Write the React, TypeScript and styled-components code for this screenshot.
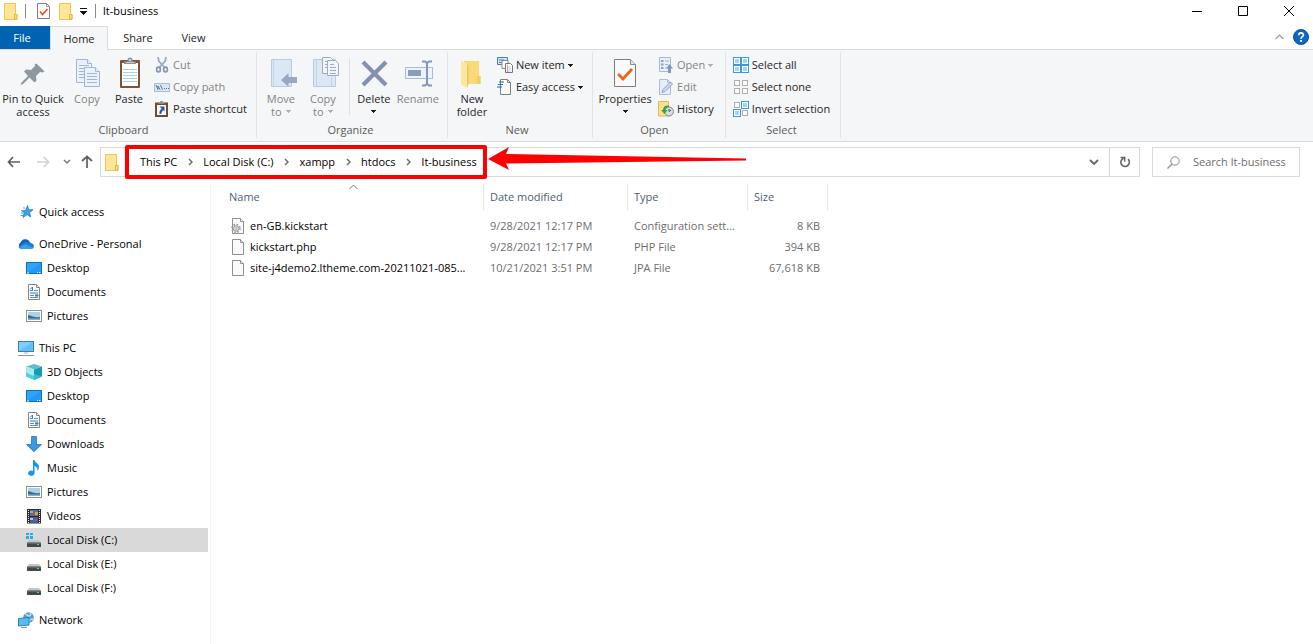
import React from "react";
import styled, { createGlobalStyle } from "styled-components";

const GlobalStyle = createGlobalStyle`
  *, *::before, *::after { box-sizing: border-box; }
  html, body, #root { height: 100%; }
  body { margin: 0; background: #fff; overflow: hidden; }
  body, button, input { font: 11px/16px "Open Sans", "Noto Sans", sans-serif; color: #000; }
  button { border: 0; padding: 0; background: none; }
  svg { display: block; flex: none; }
`;

const Window = styled.div`
  display: flex;
  flex-direction: column;
  min-height: 100%;
`;

/* ---------- title bar ---------- */

const TitleBar = styled.header`
  display: flex;
  align-items: center;
  height: 22px;
  padding-left: 4px;
`;
const QuickTools = styled.div`
  display: flex;
  align-items: center;
`;
const ToolButton = styled.button<{ $w: number }>`
  display: flex;
  justify-content: center;
  width: ${(p) => p.$w}px;
`;
const TitleRule = styled.span`
  width: 1px;
  height: 14px;
  background: #8a8a8a;
`;
const Title = styled.h1`
  margin: 0;
  font-size: 11px;
  font-weight: 400;
`;
const WindowControls = styled.div`
  display: flex;
  margin-left: auto;
  padding-right: 1px;
`;
const ControlButton = styled.button`
  display: flex;
  align-items: center;
  justify-content: center;
  width: 46px;
  height: 20px;
`;

/* ---------- tabs ---------- */

const TabBar = styled.div`
  display: flex;
  align-items: stretch;
  height: 28px;
  padding-top: 4px;
  border-bottom: 1px solid #dadbdc;
`;
const Tab = styled.button<{ $kind?: "file" | "active"; $w: number }>`
  width: ${(p) => p.$w}px;
  height: ${(p) => (p.$kind === "active" ? 24 : 23)}px;
  padding-right: ${(p) => (p.$kind === "file" ? 6 : 0)}px;
  color: ${(p) => (p.$kind === "file" ? "#fff" : "#222")};
  background: ${(p) => (p.$kind === "file" ? "#0063b1" : p.$kind === "active" ? "#f5f6f7" : "none")};
  border: ${(p) => (p.$kind === "active" ? "1px solid #dadbdc" : "0")};
  border-bottom: 0;
`;
const TabTools = styled.div`
  display: flex;
  align-items: center;
  gap: 9px;
  height: 22px;
  margin-left: auto;
  padding-right: 4px;
`;

/* ---------- ribbon ---------- */

const Ribbon = styled.div`
  display: flex;
  height: 92px;
  padding: 2px 0 3px;
  background: #f5f6f7;
  border-bottom: 1px solid #dadbdc;
`;
const Group = styled.section<{ $left: number; $right: number }>`
  display: flex;
  flex-direction: column;
  padding: 0 ${(p) => p.$right}px 0 ${(p) => p.$left}px;
  border-right: 1px solid #e2e3e4;
`;
const GroupBody = styled.div`
  display: flex;
  height: 72px;
`;
const GroupName = styled.h2`
  margin: 0;
  padding-top: 2px;
  font-size: 11px;
  line-height: 16px;
  font-weight: 400;
  text-align: center;
  color: #5a5a5a;
`;
const BigButton = styled.button<{ $w: number }>`
  display: flex;
  flex-direction: column;
  align-items: center;
  width: ${(p) => p.$w}px;
  padding-top: 5px;
  line-height: 13px;
  white-space: nowrap;
  color: #262626;
  &:disabled { color: #838383; }
  svg { margin-bottom: 3px; }
`;
const Line = styled.span`
  display: flex;
  align-items: center;
  gap: 4px;
  height: 13px;
  svg { margin: 0; }
`;
const SmallList = styled.div<{ $gap: number }>`
  display: flex;
  flex-direction: column;
  padding-top: 2px;
  margin-left: ${(p) => p.$gap}px;
`;
const SmallButton = styled.button`
  display: flex;
  align-items: center;
  gap: 3px;
  height: 22px;
  white-space: nowrap;
  color: #262626;
  &:disabled { color: #838383; }
`;
const InnerRule = styled.span`
  width: 1px;
  height: 56px;
  margin: 7px 3px 0 5px;
  background: #dcdde0;
`;

/* ---------- address row ---------- */

const AddressRow = styled.div`
  display: flex;
  align-items: center;
  height: 40px;
  padding-right: 13px;
`;
const NavButton = styled.button<{ $w: number }>`
  display: flex;
  justify-content: center;
  width: ${(p) => p.$w}px;
`;
const AddressBox = styled.div`
  display: flex;
  flex: 1;
  height: 30px;
  margin-left: 1px;
  border: 1px solid #d9d9d9;
  align-items: center;
  > svg { margin: 0 6px 0 4px; }
`;
const Crumbs = styled.nav`
  position: relative;
  display: flex;
  align-items: center;
  height: 28px;
  padding-right: 10px;
  white-space: nowrap;
`;
const Crumb = styled.a`
  color: #000;
  text-decoration: none;
`;
const CrumbArrow = styled.span<{ $w: number }>`
  display: flex;
  justify-content: center;
  width: ${(p) => p.$w}px;
`;
const Highlight = styled.span`
  position: absolute;
  inset: -3px 0;
  border: 4px solid #fe0000;
  border-radius: 2px;
  pointer-events: none;
`;
const Pointer = styled.svg`
  position: absolute;
  left: 100%;
  top: -2px;
  pointer-events: none;
`;
const BoxButton = styled.button<{ $divided?: boolean }>`
  display: flex;
  align-items: center;
  justify-content: center;
  width: 30px;
  height: 28px;
  margin-left: ${(p) => (p.$divided ? "0" : "auto")};
  border-left: ${(p) => (p.$divided ? "1px solid #d9d9d9" : "0")};
`;
const SearchBox = styled.label`
  display: flex;
  align-items: center;
  gap: 13px;
  width: 148px;
  height: 30px;
  margin-left: 12px;
  padding-left: 14px;
  border: 1px solid #d9d9d9;
`;
const SearchInput = styled.input`
  flex: 1;
  min-width: 0;
  border: 0;
  padding: 0;
  outline: 0;
  background: none;
  &::placeholder { color: #6d6d6d; opacity: 1; }
`;

/* ---------- body ---------- */

const Body = styled.div`
  display: flex;
  flex: 1;
  padding-top: 2px;
`;
const Sidebar = styled.nav`
  display: flex;
  flex-direction: column;
  gap: 8px;
  width: 211px;
  padding: 16px 2px 0 0;
  border-right: 1px solid #f3f3f3;
`;
const Branch = styled.ul`
  margin: 0;
  padding: 0;
  list-style: none;
`;
const Item = styled.a<{ $nested?: boolean; $selected?: boolean }>`
  display: flex;
  align-items: center;
  gap: 5px;
  height: 24px;
  padding-left: ${(p) => (p.$nested ? 26 : 18)}px;
  color: #000;
  text-decoration: none;
  background: ${(p) => (p.$selected ? "#d9d9d9" : "none")};
`;
const Main = styled.main`
  flex: 1;
  padding-left: 13px;
`;
const Files = styled.table`
  width: 604px;
  table-layout: fixed;
  border-collapse: collapse;
`;
const Head = styled.th<{ $w: number }>`
  width: ${(p) => p.$w}px;
  padding: 0 0 5px;
  font-weight: 400;
  text-align: left;
`;
const HeadLabel = styled.div<{ $first?: boolean }>`
  position: relative;
  height: 26px;
  padding-left: ${(p) => (p.$first ? 5 : 6)}px;
  line-height: 26px;
  color: #4c607a;
  border-right: 1px solid #e5e5e5;
`;
const SortMark = styled.svg`
  position: absolute;
  top: 0;
  left: 50%;
  margin-left: -5px;
`;
const Cell = styled.td<{ $kind?: "name" | "size" }>`
  height: 21px;
  padding: 0 ${(p) => (p.$kind === "size" ? 8 : 0)}px 0 ${(p) => (p.$kind === "name" ? 7 : 6)}px;
  text-align: ${(p) => (p.$kind === "size" ? "right" : "left")};
  white-space: nowrap;
  color: #6d6d6d;
`;
const FileName = styled.span`
  display: flex;
  align-items: center;
  gap: 5px;
  color: #000;
`;

/* ---------- icons ---------- */

const Folder = () => (
  <svg width="14" height="17" viewBox="0 0 14 17">
    <path d="M.5.5h11v11h1.500v5H.5z" fill="#ffe694" stroke="#e9c65a" />
    <path d="M10.500 16v-4.500h2.500V16z" fill="#ffe08a" stroke="#e0b640" />
  </svg>
);
const MiniCheck = () => (
  <svg width="13" height="16" viewBox="0 0 13 16">
    <path d="M.5.5h9l3 3v12H.5z" fill="#fbfbfb" stroke="#7f7f7f" />
    <path d="M9.500.5v3h3" fill="none" stroke="#9a9a9a" />
    <path d="M3 8.500l2.500 3 5-5.500" fill="none" stroke="#e8541c" strokeWidth="1.700" />
  </svg>
);
const Down = ({ off = false }: { off?: boolean }) => (
  <svg width="5" height="3" viewBox="0 0 5 3" shapeRendering="crispEdges">
    <path d="M0 0h5v1H4v1H3v1H2V2H1V1H0z" fill={off ? "#b0b0b0" : "#1e1e1e"} />
  </svg>
);
const Chevron = ({ color = "#6e6e6e", dir = "right" }: { color?: string; dir?: "right" | "down" }) =>
  dir === "right" ? (
    <svg width="5" height="8" viewBox="0 0 5 8">
      <path d="M1 1l3 3-3 3" fill="none" stroke={color} strokeWidth="1.500" />
    </svg>
  ) : (
    <svg width="8" height="6" viewBox="0 0 8 6">
      <path d="M1 1l3 3 3-3" fill="none" stroke={color} strokeWidth="1.500" />
    </svg>
  );

const Pin = () => (
  <svg width="32" height="32" viewBox="0 0 32 32">
    <path d="M19.500 6.500L27.500 14.500l-2 1-2.500-.5-4 4 .5 4.500-2 2-5-5L6 27l-2.500 1L4.500 25.500 11 19 7 14.500l2-2 5 .5 4-4-.3-1.400z" fill="#8c979f" />
  </svg>
);
const CopyIcon = () => (
  <svg width="32" height="32" viewBox="0 0 32 32">
    <g fill="#eaf1fb" stroke="#a3b6d3">
      <path d="M5.500 2.500h11l4 4v19h-15z" />
      <path d="M16.500 2.500v4h4" />
      <path d="M8 8.500h10M8 11.500h10M8 14.500h6M8 17.500h5M8 20.500h5" strokeWidth="1" />
      <path d="M13.500 10.500h11l4 4v15h-15z" />
      <path d="M24.500 10.500v4h4" />
      <path d="M16 16.500h10M16 19.500h10M16 22.500h10M16 25.500h10" />
    </g>
  </svg>
);
const PasteIcon = () => (
  <svg width="32" height="32" viewBox="0 0 32 32">
    <rect x="7" y="3" width="20" height="28" rx="1" fill="#7b5535" />
    <rect x="9" y="6" width="16" height="23" fill="#fff" />
    <path d="M10 12.500h14M10 15.500h14M10 18.500h14M10 21.500h14M10 24.500h14" stroke="#a9cfeb" />
    <path d="M11 7V4.500h3.500V3a2.500 2.500 0 0 1 5 0v1.500H23V7z" fill="#8d9298" />
    <path d="M13 5.500h8" stroke="#c7cacd" />
    <circle cx="17" cy="3" r="1" fill="#e9eaeb" />
  </svg>
);
const CutIcon = () => (
  <svg width="16" height="16" viewBox="0 0 16 16">
    <path d="M4 0l.8 4L11 11M12 0l-.8 4L5 11" fill="none" stroke="#9aabc4" strokeWidth="1.800" />
    <g fill="none" stroke="#8093b3" strokeWidth="1.600">
      <ellipse cx="4.500" cy="12.500" rx="1.900" ry="2.400" />
      <ellipse cx="11.500" cy="12.500" rx="1.900" ry="2.400" />
    </g>
  </svg>
);
const CopyPathIcon = () => (
  <svg width="16" height="16" viewBox="0 0 16 16">
    <rect x=".5" y="4.500" width="15" height="8" fill="#dbe6f5" stroke="#a9bddb" />
    <path d="M2 6l2 4.500V7l2 3.500M6.500 6l2 4.500" fill="none" stroke="#5d7399" />
    <path d="M10 9.500h1M12 9.500h1M14 9.500h1" stroke="#5d7399" />
  </svg>
);
const ShortcutIcon = () => (
  <svg width="16" height="16" viewBox="0 0 16 16">
    <rect x="1" y="1.500" width="13" height="14.500" fill="#6f4c30" />
    <rect x="3" y="4" width="9" height="10" fill="#f4f8fd" />
    <path d="M4.500 3V1.500h1.800V0h2.400v1.500h1.800V3z" fill="#8b8f94" />
    <path d="M5.500 5.500h5v5L9 9l-2 4H5.500c-.3-2.500.5-3.800 2-5.500z" fill="#2a5ca8" />
  </svg>
);
const MoveIcon = () => (
  <svg width="32" height="32" viewBox="0 0 32 32">
    <path d="M6.500 2.500h20v27h-20z" fill="#dbe7f5" stroke="#b9cbe2" />
    <path d="M8.500 3v26" stroke="#c6d6ea" />
    <path d="M16 23l7.500-7v4H32v6h-8.500v4z" fill="#98a8c2" />
  </svg>
);
const CopyToIcon = () => (
  <svg width="32" height="32" viewBox="0 0 32 32">
    <path d="M6.500 2.500h22v27h-22z" fill="#dbe7f5" stroke="#b9cbe2" />
    <path d="M9.500 3v26M24.500 20v9" stroke="#c3d3e9" />
    <g fill="#f2f6fb" stroke="#9aacc8">
      <path d="M15.500.500h8l3 3v13h-11z" />
      <path d="M18 4.500h4M18 7.500h4M18 10.500h4" />
      <path d="M20.500 3.500h8l3 3v12h-11z" />
      <path d="M23 7.500h4M23 10.500h6M23 13.500h6M23 16.500h6" />
    </g>
  </svg>
);
const DeleteIcon = () => (
  <svg width="32" height="32" viewBox="0 0 32 32">
    <path d="M5 5l23 23M28 5L5 28" stroke="#8291b0" strokeWidth="4.200" />
  </svg>
);
const RenameIcon = () => (
  <svg width="32" height="32" viewBox="0 0 32 32">
    <rect x="3.500" y="10.500" width="27" height="11" fill="#eef3fa" stroke="#a9bddb" />
    <rect x="6" y="13" width="13" height="6" fill="#8b9dbe" />
    <path d="M20 4.500h3l2 1.500 2-1.500h3M20 28.500h3l2-1.500 2 1.500h3M25 6v21" fill="none" stroke="#8495b5" strokeWidth="2" />
  </svg>
);
const NewFolderIcon = () => (
  <svg width="32" height="32" viewBox="0 0 32 32">
    <path d="M8 4h15v15h1.500v8H8z" fill="#fbd978" />
    <path d="M5 4l6 2.500V31l-6-3.500z" fill="#fce6a2" />
    <path d="M11 6.500V31l1.500-4V9z" fill="#efc45c" />
    <path d="M21 19h3.500v8H21z" fill="#f3cd68" />
  </svg>
);
const NewItemIcon = () => (
  <svg width="16" height="16" viewBox="0 0 16 16">
    <path d="M.5.5h10v7H.5z" fill="#cfe6f8" stroke="#4b83ad" />
    <path d="M2 3h5M2 5.500h3" stroke="#4b83ad" />
    <path d="M5 3.500h6v8H5z" fill="#fff" stroke="#888" />
    <path d="M8.500 6.500h5l2 2v7h-7z" fill="#fff" stroke="#777" />
    <path d="M10 10h4M10 12h4M10 14h4" stroke="#a8bedb" strokeWidth=".8" />
    <path d="M10.500 8v7" stroke="#e58a7a" strokeWidth=".8" />
  </svg>
);
const EasyIcon = () => (
  <svg width="16" height="16" viewBox="0 0 16 16">
    <path d="M3.500.5h7l3 3v12h-10z" fill="#fbfbfb" stroke="#808080" />
    <path d="M10.500.5v3h3" fill="none" stroke="#808080" />
    <path d="M2 3h5M1 5.500h5M0 8h5" stroke="#1d6bb3" strokeWidth="1.200" />
  </svg>
);
const PropertiesIcon = () => (
  <svg width="32" height="32" viewBox="0 0 32 32">
    <path d="M5.500 2.500h16l5 5v22h-21z" fill="#fafafa" stroke="#7d7d7d" />
    <path d="M21.500 2.500v5h5" fill="#e4e4e4" stroke="#8b8b8b" />
    <path d="M9 17l5 5L23 12" fill="none" stroke="#f0611a" strokeWidth="2.800" />
  </svg>
);
const OpenIcon = () => (
  <svg width="16" height="16" viewBox="0 0 16 16">
    <path d="M1.500.5h11v14h-11z" fill="#e9f0fa" stroke="#a9b9d3" />
    <path d="M3 3h2.500v2H3zM3 6.500h2.500v2H3zM3 10h2.500v2H3z" fill="#8ea1c4" />
    <path d="M7 4h4M7 7.500h3M7 11h2" stroke="#9dafcd" />
    <path d="M11.500 7L15 11.500h-2V16h-3v-4.500H8z" fill="#8597b8" />
  </svg>
);
const EditIcon = () => (
  <svg width="16" height="16" viewBox="0 0 16 16">
    <path d="M1.500.5h8l3 3v12h-11z" fill="#e6eefa" stroke="#a9bddb" />
    <path d="M9.500.5v3h3" fill="none" stroke="#a9bddb" />
    <path d="M4 13.500l1-3L12.500 3l2 2L7 12.500z" fill="#cad8ee" stroke="#8fa5cb" />
  </svg>
);
const HistoryIcon = () => (
  <svg width="16" height="16" viewBox="0 0 16 16">
    <path d="M.5.500h10V15H.5z" fill="#fde28b" stroke="#e2bb52" />
    <circle cx="11" cy="10.500" r="4.500" fill="#dadde0" stroke="#7f858b" />
    <path d="M11 8v2.500l2-1.500" fill="none" stroke="#4c5157" />
    <path d="M11 4.500c-4-.5-6 1.500-6 4.500H3l3.500 4L9.500 9H7.500c0-2 1.500-3 3.500-3z" fill="#2fa84a" />
  </svg>
);
const Squares = ({ on }: { on: boolean[] }) => (
  <svg width="16" height="16" viewBox="0 0 16 16">
    {on.map((v, i) => {
      const x = (i % 2) * 8;
      const y = Math.floor(i / 2) * 8;
      return v ? (
        <g key={i}>
          <rect x={x + 0.5} y={y + 0.5} width="7" height="7" fill="#fff" stroke="#3b97de" />
          <rect x={x + 2} y={y + 2} width="4" height="4" fill="#a6d3f5" />
        </g>
      ) : (
        <rect key={i} x={x + 1.5} y={y + 1.5} width="5" height="5" fill="#fff" stroke="#adadad" />
      );
    })}
  </svg>
);

const Arrow = ({ dir, color }: { dir: "left" | "right" | "up"; color: string }) => (
  <svg width="14" height="14" viewBox="0 0 14 14">
    <g transform={dir === "right" ? "rotate(180 7 7)" : dir === "up" ? "rotate(90 7 7)" : undefined}>
      <path d="M6 2L1.500 7 6 12M2 7h11" fill="none" stroke={color} strokeWidth="1.700" />
    </g>
  </svg>
);

const StarIcon = () => (
  <svg width="16" height="16" viewBox="0 0 16 16">
    <path d="M9.500 1.500l1.200 4.200 4.300.1-3.500 2.700 1.200 4.500-3.600-2.400L5 13.500l1.200-4.600-2-2 3.500-.5z" fill="#3aa3ea" stroke="#1c7cc6" strokeWidth=".8" />
    <path d="M5 4h2M3 6.500h2M3 9h2.500M2.500 11.500H5" stroke="#4aa7e4" />
  </svg>
);
const CloudIcon = () => (
  <svg width="16" height="16" viewBox="0 0 16 16">
    <path d="M3.500 12.500A3.300 3.300 0 0 1 2.600 6.400 5 5 0 0 1 11 5l1.500 2L4 12.500z" fill="#0f5fb5" />
    <path d="M6.500 6c2-.6 3.500.3 4.800 1.200 2.500-.8 4.600.8 4.600 2.800S14.500 13 13 13H4c-1.500 0-3-.8-3.500-2z" fill="#1b7fd6" />
    <path d="M1 11.800L7.500 8l7.500 4c-.6.600-1.200 1-2 1H4c-1.200 0-2.200-.4-3-1.200z" fill="#2ea4ee" />
  </svg>
);
const DesktopIcon = () => (
  <svg width="16" height="16" viewBox="0 0 16 16">
    <rect x=".5" y="2.500" width="15" height="11" fill="#1e9bf5" stroke="#1470b8" />
    <path d="M1 13V3h14z" fill="#41b0fa" opacity=".5" />
    <path d="M1 13h2M11 12.500h1M13 12.500h1.500" stroke="#d8efff" />
  </svg>
);
const DocIcon = () => (
  <svg width="16" height="16" viewBox="0 0 16 16">
    <path d="M2.500.5h8l3 3v12h-11z" fill="#fdfdfd" stroke="#858585" />
    <path d="M10.500.5v3h3" fill="#eee" stroke="#858585" />
    <path d="M4 6.500h3M8 6.500h4M4 11.500h4M4 13.500h8" stroke="#5b8fb9" />
    <path d="M4 5.500L6.500 3v3M4 9h8" fill="none" stroke="#1d86cf" />
    <rect x="9" y="10.500" width="3.500" height="2" fill="#4a7c66" />
  </svg>
);
const PictureIcon = () => (
  <svg width="16" height="16" viewBox="0 0 16 16">
    <rect x=".5" y="2.500" width="15" height="11" fill="#fff" stroke="#8f8f8f" />
    <rect x="2" y="4" width="12" height="8" fill="#a8d1f2" />
    <path d="M2 7.500c2-1 3 .5 5 1s4 1 7 .5v3H2z" fill="#3f6f77" />
    <path d="M2 10.500h12V12H2z" fill="#7fb0d6" />
  </svg>
);
const PcIcon = () => (
  <svg width="16" height="16" viewBox="0 0 16 16">
    <rect x=".5" y="1.500" width="15" height="10" fill="#5fc0f8" stroke="#3b7fae" />
    <path d="M1 11V2h14z" fill="#93d6fb" opacity=".6" />
    <path d="M6 13h4" stroke="#a5b3bd" strokeWidth="1" />
    <path d="M0 15.500h16" stroke="#8a9ba8" />
  </svg>
);
const CubeIcon = () => (
  <svg width="16" height="16" viewBox="0 0 16 16">
    <path d="M8 0l8 2.500-8 3-8-3z" fill="#62bccb" />
    <path d="M0 2.500l8 3V16l-8-3.500z" fill="#a5ecef" />
    <path d="M0 8.500L8 12v4l-8-3.500z" fill="#4fd0dc" />
    <path d="M8 5.500l8-3v10L8 16z" fill="#1899b5" />
    <path d="M8 10l8 2.500L8 16z" fill="#35bccd" />
  </svg>
);
const DownloadIcon = () => (
  <svg width="16" height="16" viewBox="0 0 16 16">
    <path d="M5.500.5h5v8h5L8 15.700.5 8.500h5z" fill="#3b96e3" stroke="#2379c4" strokeWidth=".8" />
  </svg>
);
const MusicIcon = () => (
  <svg width="16" height="16" viewBox="0 0 16 16">
    <path d="M7 0h1.500c.3 3 4.500 3.500 4.500 7 0 1.500-.8 3-1.800 4 .8-3-.7-4.500-2.700-5v7.200A3.200 2.600 0 1 1 7 11z" fill="#1496ec" />
  </svg>
);
const VideoIcon = () => (
  <svg width="16" height="16" viewBox="0 0 16 16">
    <rect x="1" y="1" width="14" height="14.500" fill="#2c2c30" />
    <path d="M2.500 2v13M13.500 2v13" stroke="#e8e8e8" strokeDasharray="1 1" />
    <rect x="4" y="2" width="8" height="6" fill="#3f6fd0" />
    <rect x="4" y="9" width="8" height="6" fill="#3760ae" />
    <path d="M4 3h3v2H4zM9 4h3v3H9z" fill="#d7a240" />
    <path d="M6 5h3v2H6zM8 11h3v2H8z" fill="#b5563f" />
    <path d="M4 10h3v2H4z" fill="#e3c26a" />
  </svg>
);
const DiskIcon = ({ system = false }: { system?: boolean }) => (
  <svg width="16" height="16" viewBox="0 0 16 16">
    <path d="M3 8h10l2 3H1z" fill="#c4c6c8" />
    <rect x="1" y="10.500" width="14" height="4.500" rx=".5" fill="#45484b" />
    <path d="M1 11h14" stroke="#808386" />
    <rect x="11" y="12" width="2" height="1" fill="#4fe06a" />
    {system && (
      <>
        <path d="M0 2h7v6H0z" fill="#d9d9d9" />
        <path d="M0 1h3v2H0zM4 1h3v2H4zM0 4h3v3H0zM4 4h3v3H4z" fill="#1eb0f0" />
      </>
    )}
  </svg>
);
const NetworkIcon = () => (
  <svg width="16" height="16" viewBox="0 0 16 16">
    <circle cx="10.500" cy="5.500" r="5.300" fill="#5a9ccb" />
    <path d="M7 2c2 0 2 2 4 2s2-2 1-3M11 10c0-2 2-3 4-3" fill="none" stroke="#bfe0f2" strokeWidth="1.600" />
    <path d="M.5 6.500l10.500-1v7.500l-10.500 1z" fill="#55bdf6" stroke="#2c7fb4" />
    <path d="M3 15.500h6" stroke="#8a9ba8" />
  </svg>
);
const FileIcon = ({ gear = false }: { gear?: boolean }) => (
  <svg width="14" height="16" viewBox="0 0 14 16">
    <path d="M1.500.5h8l3 3v12h-11z" fill="#fafafa" stroke="#909090" />
    <path d="M9.500.5v3h3" fill="#eee" stroke="#909090" />
    {gear && (
      <g>
        <circle cx="5" cy="10.500" r="3.800" fill="none" stroke="#9a9a9a" strokeWidth="2" strokeDasharray="1.500 1.500" />
        <circle cx="5" cy="10.500" r="2.700" fill="#e3e6e9" stroke="#9e9e9e" />
        <circle cx="5" cy="10.500" r="1" fill="#fff" stroke="#9e9e9e" strokeWidth=".8" />
      </g>
    )}
  </svg>
);

/* ---------- data ---------- */

type Node = { name: string; icon: React.ReactNode; selected?: boolean };
const tree: Node[][] = [
  [{ name: "Quick access", icon: <StarIcon /> }],
  [
    { name: "OneDrive - Personal", icon: <CloudIcon /> },
    { name: "Desktop", icon: <DesktopIcon /> },
    { name: "Documents", icon: <DocIcon /> },
    { name: "Pictures", icon: <PictureIcon /> },
  ],
  [
    { name: "This PC", icon: <PcIcon /> },
    { name: "3D Objects", icon: <CubeIcon /> },
    { name: "Desktop", icon: <DesktopIcon /> },
    { name: "Documents", icon: <DocIcon /> },
    { name: "Downloads", icon: <DownloadIcon /> },
    { name: "Music", icon: <MusicIcon /> },
    { name: "Pictures", icon: <PictureIcon /> },
    { name: "Videos", icon: <VideoIcon /> },
    { name: "Local Disk (C:)", icon: <DiskIcon system />, selected: true },
    { name: "Local Disk (E:)", icon: <DiskIcon /> },
    { name: "Local Disk (F:)", icon: <DiskIcon /> },
  ],
  [{ name: "Network", icon: <NetworkIcon /> }],
];

const files = [
  { name: "en-GB.kickstart", date: "9/28/2021 12:17 PM", type: "Configuration sett...", size: "8 KB", gear: true },
  { name: "kickstart.php", date: "9/28/2021 12:17 PM", type: "PHP File", size: "394 KB" },
  { name: "site-j4demo2.ltheme.com-20211021-085...", date: "10/21/2021 3:51 PM", type: "JPA File", size: "67,618 KB" },
];

const path = ["This PC", "Local Disk (C:)", "xampp", "htdocs", "lt-business"];

export default function App() {
  return (
    <Window>
      <GlobalStyle />
      <TitleBar>
        <QuickTools>
          <Folder />
          <ToolButton as="span" $w={15}><TitleRule /></ToolButton>
          <ToolButton $w={20} aria-label="Properties"><MiniCheck /></ToolButton>
          <ToolButton $w={25} aria-label="New folder"><Folder /></ToolButton>
          <ToolButton $w={10} aria-label="Customize Quick Access Toolbar">
            <svg width="7" height="7" viewBox="0 0 7 7" shapeRendering="crispEdges">
              <path d="M0 0h7v1H0zM0 3h7v1H6v1H5v1H4v1H3V6H2V5H1V4H0z" fill="#111" />
            </svg>
          </ToolButton>
          <ToolButton as="span" $w={15}><TitleRule /></ToolButton>
        </QuickTools>
        <Title>lt-business</Title>
        <WindowControls>
          <ControlButton aria-label="Minimize">
            <svg width="10" height="10"><path d="M0 5.500h10" stroke="#000" /></svg>
          </ControlButton>
          <ControlButton aria-label="Maximize">
            <svg width="10" height="10"><path d="M.5.500h9v9h-9z" fill="none" stroke="#000" /></svg>
          </ControlButton>
          <ControlButton aria-label="Close">
            <svg width="10" height="10"><path d="M0 0l10 10M10 0L0 10" stroke="#000" /></svg>
          </ControlButton>
        </WindowControls>
      </TitleBar>

      <TabBar>
        <Tab $w={50} $kind="file">File</Tab>
        <Tab $w={58} $kind="active">Home</Tab>
        <Tab $w={60}>Share</Tab>
        <Tab $w={51}>View</Tab>
        <TabTools>
          <button aria-label="Minimize the Ribbon">
            <svg width="9" height="6"><path d="M.5 5l4-4 4 4" fill="none" stroke="#9a9a9a" strokeWidth="1.200" /></svg>
          </button>
          <button aria-label="Help">
            <svg width="16" height="16" viewBox="0 0 16 16">
              <circle cx="8" cy="8" r="7.500" fill="#0a68c6" stroke="#0b4f97" />
              <path d="M5.800 6.200c0-3 4.600-2.900 4.600-.2C10.400 7.700 8 7.600 8 9.800" fill="none" stroke="#fff" strokeWidth="1.700" />
              <rect x="7.100" y="11" width="1.900" height="1.900" fill="#fff" />
            </svg>
          </button>
        </TabTools>
      </TabBar>

      <Ribbon>
        <Group $left={0} $right={9}>
          <GroupBody>
            <BigButton $w={66}><Pin /><Line>Pin to Quick</Line><Line>access</Line></BigButton>
            <BigButton $w={42} disabled><CopyIcon /><Line>Copy</Line></BigButton>
            <BigButton $w={42}><PasteIcon /><Line>Paste</Line></BigButton>
            <SmallList $gap={4}>
              <SmallButton disabled><CutIcon />Cut</SmallButton>
              <SmallButton disabled><CopyPathIcon />Copy path</SmallButton>
              <SmallButton><ShortcutIcon />Paste shortcut</SmallButton>
            </SmallList>
          </GroupBody>
          <GroupName>Clipboard</GroupName>
        </Group>
        <Group $left={3} $right={6}>
          <GroupBody>
            <BigButton $w={42} disabled><MoveIcon /><Line>Move</Line><Line>to <Down off /></Line></BigButton>
            <BigButton $w={42} disabled><CopyToIcon /><Line>Copy</Line><Line>to <Down off /></Line></BigButton>
            <InnerRule />
            <BigButton $w={42}><DeleteIcon /><Line>Delete</Line><Line><Down /></Line></BigButton>
            <BigButton $w={46} disabled><RenameIcon /><Line>Rename</Line></BigButton>
          </GroupBody>
          <GroupName>Organize</GroupName>
        </Group>
        <Group $left={3} $right={9}>
          <GroupBody>
            <BigButton $w={42}><NewFolderIcon /><Line>New</Line><Line>folder</Line></BigButton>
            <SmallList $gap={4}>
              <SmallButton><NewItemIcon />New item <Down /></SmallButton>
              <SmallButton><EasyIcon />Easy access <Down /></SmallButton>
            </SmallList>
          </GroupBody>
          <GroupName>New</GroupName>
        </Group>
        <Group $left={2} $right={11}>
          <GroupBody>
            <BigButton $w={60}><PropertiesIcon /><Line>Properties</Line><Line><Down /></Line></BigButton>
            <SmallList $gap={3}>
              <SmallButton disabled><OpenIcon />Open <Down off /></SmallButton>
              <SmallButton disabled><EditIcon />Edit</SmallButton>
              <SmallButton><HistoryIcon />History</SmallButton>
            </SmallList>
          </GroupBody>
          <GroupName>Open</GroupName>
        </Group>
        <Group $left={7} $right={10}>
          <GroupBody>
            <SmallList $gap={0}>
              <SmallButton><Squares on={[true, true, true, true]} />Select all</SmallButton>
              <SmallButton><Squares on={[false, false, false, false]} />Select none</SmallButton>
              <SmallButton><Squares on={[false, true, true, false]} />Invert selection</SmallButton>
            </SmallList>
          </GroupBody>
          <GroupName>Select</GroupName>
        </Group>
      </Ribbon>

      <AddressRow>
        <NavButton $w={27} aria-label="Back"><Arrow dir="left" color="#5f5f5f" /></NavButton>
        <NavButton $w={31} aria-label="Forward"><Arrow dir="right" color="#d2d2d2" /></NavButton>
        <NavButton $w={17} aria-label="Recent locations"><Chevron dir="down" color="#777" /></NavButton>
        <NavButton $w={24} aria-label="Up"><Arrow dir="up" color="#5f5f5f" /></NavButton>
        <AddressBox>
          <Folder />
          <Crumbs aria-label="Path">
            {path.map((p, i) => (
              <React.Fragment key={p}>
                <CrumbArrow $w={i === 0 ? 15 : 26}>
                  {i === 0 ? null : <Chevron />}
                </CrumbArrow>
                <Crumb href="#">{p}</Crumb>
              </React.Fragment>
            ))}
            <Highlight />
            <Pointer width="260" height="28" viewBox="0 0 260 28">
              <path d="M1 13L22 1l-3 7 240 4.500v2L19 17.500l3 6.500z" fill="#fe0000" />
            </Pointer>
          </Crumbs>
          <BoxButton aria-label="Previous locations">
            <svg width="10" height="7"><path d="M1 1l4 4 4-4" fill="none" stroke="#666" strokeWidth="1.800" /></svg>
          </BoxButton>
          <BoxButton $divided aria-label="Refresh">
            <svg width="12" height="12" viewBox="0 0 12 12">
              <path d="M9 3.200A4.200 4.200 0 1 1 3 3.400L4.800 2" fill="none" stroke="#666" strokeWidth="1.700" />
              <path d="M1.500 1.500h4.200v4.200" fill="none" stroke="#666" strokeWidth="1.500" />
            </svg>
          </BoxButton>
        </AddressBox>
        <SearchBox>
          <svg width="13" height="13" viewBox="0 0 13 13">
            <circle cx="8" cy="5" r="4.200" fill="none" stroke="#8a8a8a" />
            <path d="M5 8l-4.500 4.500" stroke="#8a8a8a" strokeWidth="1.200" />
          </svg>
          <SearchInput type="text" placeholder="Search lt-business" aria-label="Search lt-business" />
        </SearchBox>
      </AddressRow>

      <Body>
        <Sidebar aria-label="Folders">
          {tree.map((branch, b) => (
            <Branch key={b}>
              {branch.map((n, i) => (
                <li key={n.name}>
                  <Item href="#" $nested={i > 0} $selected={n.selected}>{n.icon}{n.name}</Item>
                </li>
              ))}
            </Branch>
          ))}
        </Sidebar>
        <Main>
          <Files>
            <thead>
              <tr>
                <Head $w={260}>
                  <HeadLabel $first>
                    Name
                    <SortMark width="9" height="6"><path d="M.5 5l4-4 4 4" fill="none" stroke="#777" /></SortMark>
                  </HeadLabel>
                </Head>
                <Head $w={144}><HeadLabel>Date modified</HeadLabel></Head>
                <Head $w={120}><HeadLabel>Type</HeadLabel></Head>
                <Head $w={80}><HeadLabel>Size</HeadLabel></Head>
              </tr>
            </thead>
            <tbody>
              {files.map((f) => (
                <tr key={f.name}>
                  <Cell $kind="name"><FileName><FileIcon gear={f.gear} />{f.name}</FileName></Cell>
                  <Cell>{f.date}</Cell>
                  <Cell>{f.type}</Cell>
                  <Cell $kind="size">{f.size}</Cell>
                </tr>
              ))}
            </tbody>
          </Files>
        </Main>
      </Body>
    </Window>
  );
}
